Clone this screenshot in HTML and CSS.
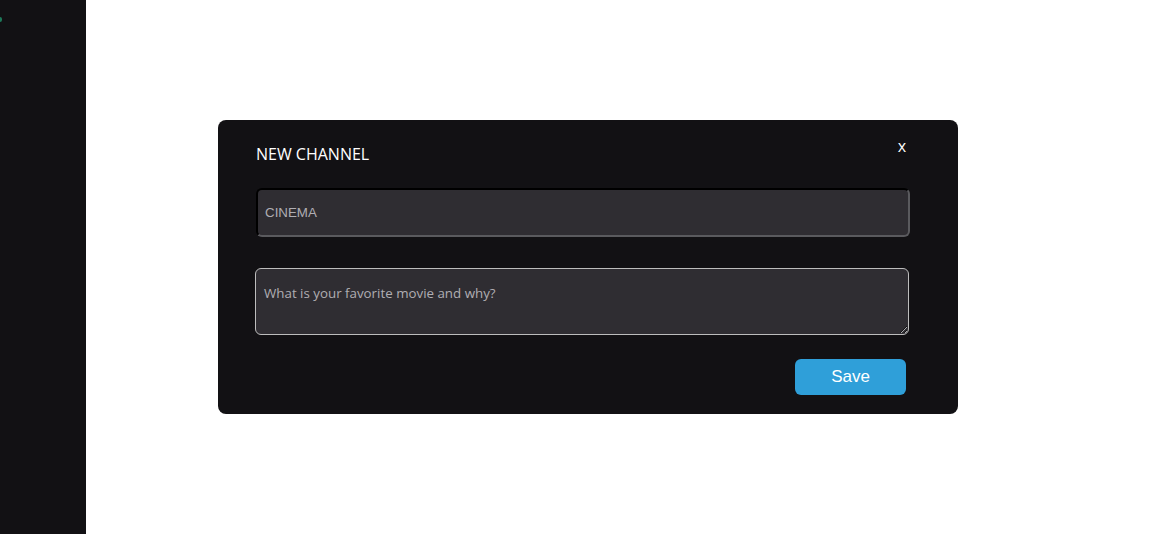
FILE: index.html
```html
<!DOCTYPE html>
<html lang="en">
<head>
<meta charset="utf-8">
<title>New channel</title>
<link rel="stylesheet" href="styles.css">
</head>
<body>
<div class="app">
  <aside class="sidebar"><span class="dot"></span></aside>
  <main class="main"></main>
</div>
<div class="overlay">
  <div class="modal">
    <div class="modal-head">
      <h2 class="title">NEW CHANNEL</h2>
      <button class="close" type="button">x</button>
    </div>
    <input class="name-input" type="text" value="CINEMA">
    <textarea class="desc-input">What is your favorite movie and why?</textarea>
    <div class="actions">
      <button class="save" type="button">Save</button>
    </div>
  </div>
</div>
</body>
</html>
```

FILE: styles.css
```css
html, body {
  margin: 0;
  padding: 0;
  height: 100%;
  background: #ffffff;
  font-family: "Open Sans", "Liberation Sans", sans-serif;
}

.app {
  display: flex;
  height: 100%;
}

.sidebar {
  width: 86px;
  flex: none;
  background: #121114;
  position: relative;
}

.dot {
  position: absolute;
  left: -2px;
  top: 17px;
  width: 4px;
  height: 5px;
  border-radius: 2px;
  background: #1e7a5a;
}

.main {
  flex: 1;
  background: #ffffff;
}

.overlay {
  position: fixed;
  inset: 0;
  display: flex;
  align-items: center;
  justify-content: center;
  padding-left: 8px;
}

.modal {
  width: 740px;
  height: 294px;
  box-sizing: border-box;
  background: #121114;
  border-radius: 8px;
  padding: 21px 48px 0 37px;
  display: flex;
  flex-direction: column;
}

.modal-head {
  display: flex;
  justify-content: space-between;
  align-items: flex-start;
  height: 47px;
}

.title {
  margin: 2px 0 0 1px;
  font-size: 16px;
  font-weight: 400;
  color: #ffffff;
  line-height: 22px;
}

.close {
  background: none;
  border: none;
  padding: 0;
  margin: -6px 4px 0 0;
  color: #ffffff;
  font-family: "Open Sans", "Liberation Sans", sans-serif;
  font-size: 16px;
  line-height: 22px;
  cursor: pointer;
}

.name-input {
  box-sizing: border-box;
  width: 654px;
  height: 49px;
  margin-left: 1px;
  background: #2f2d32;
  border: 2px inset #5a5a5e;
  border-top-color: #1c1b1f;
  border-left-color: #1c1b1f;
  border-radius: 6px;
  padding: 0 7px;
  color: #b0aeb3;
  font-family: "Liberation Sans", Arial, sans-serif;
  font-size: 13.33px;
  outline: none;
}

.desc-input {
  box-sizing: border-box;
  width: 654px;
  height: 67px;
  margin-top: 31px;
  background: #2f2d32;
  border: 1px solid #bdbdbd;
  border-radius: 6px;
  padding: 15px 8px;
  color: #b0aeb3;
  font-family: "Open Sans", "Liberation Sans", sans-serif;
  font-size: 13.33px;
  line-height: 18px;
  resize: vertical;
  outline: none;
}

.actions {
  display: flex;
  justify-content: flex-end;
  margin-top: 24px;
  width: 651px;
}

.save {
  width: 111px;
  height: 36px;
  background: #2f9fd9;
  border: none;
  border-radius: 6px;
  color: #ffffff;
  font-family: "Liberation Sans", Arial, sans-serif;
  font-size: 17px;
  cursor: pointer;
}
```
